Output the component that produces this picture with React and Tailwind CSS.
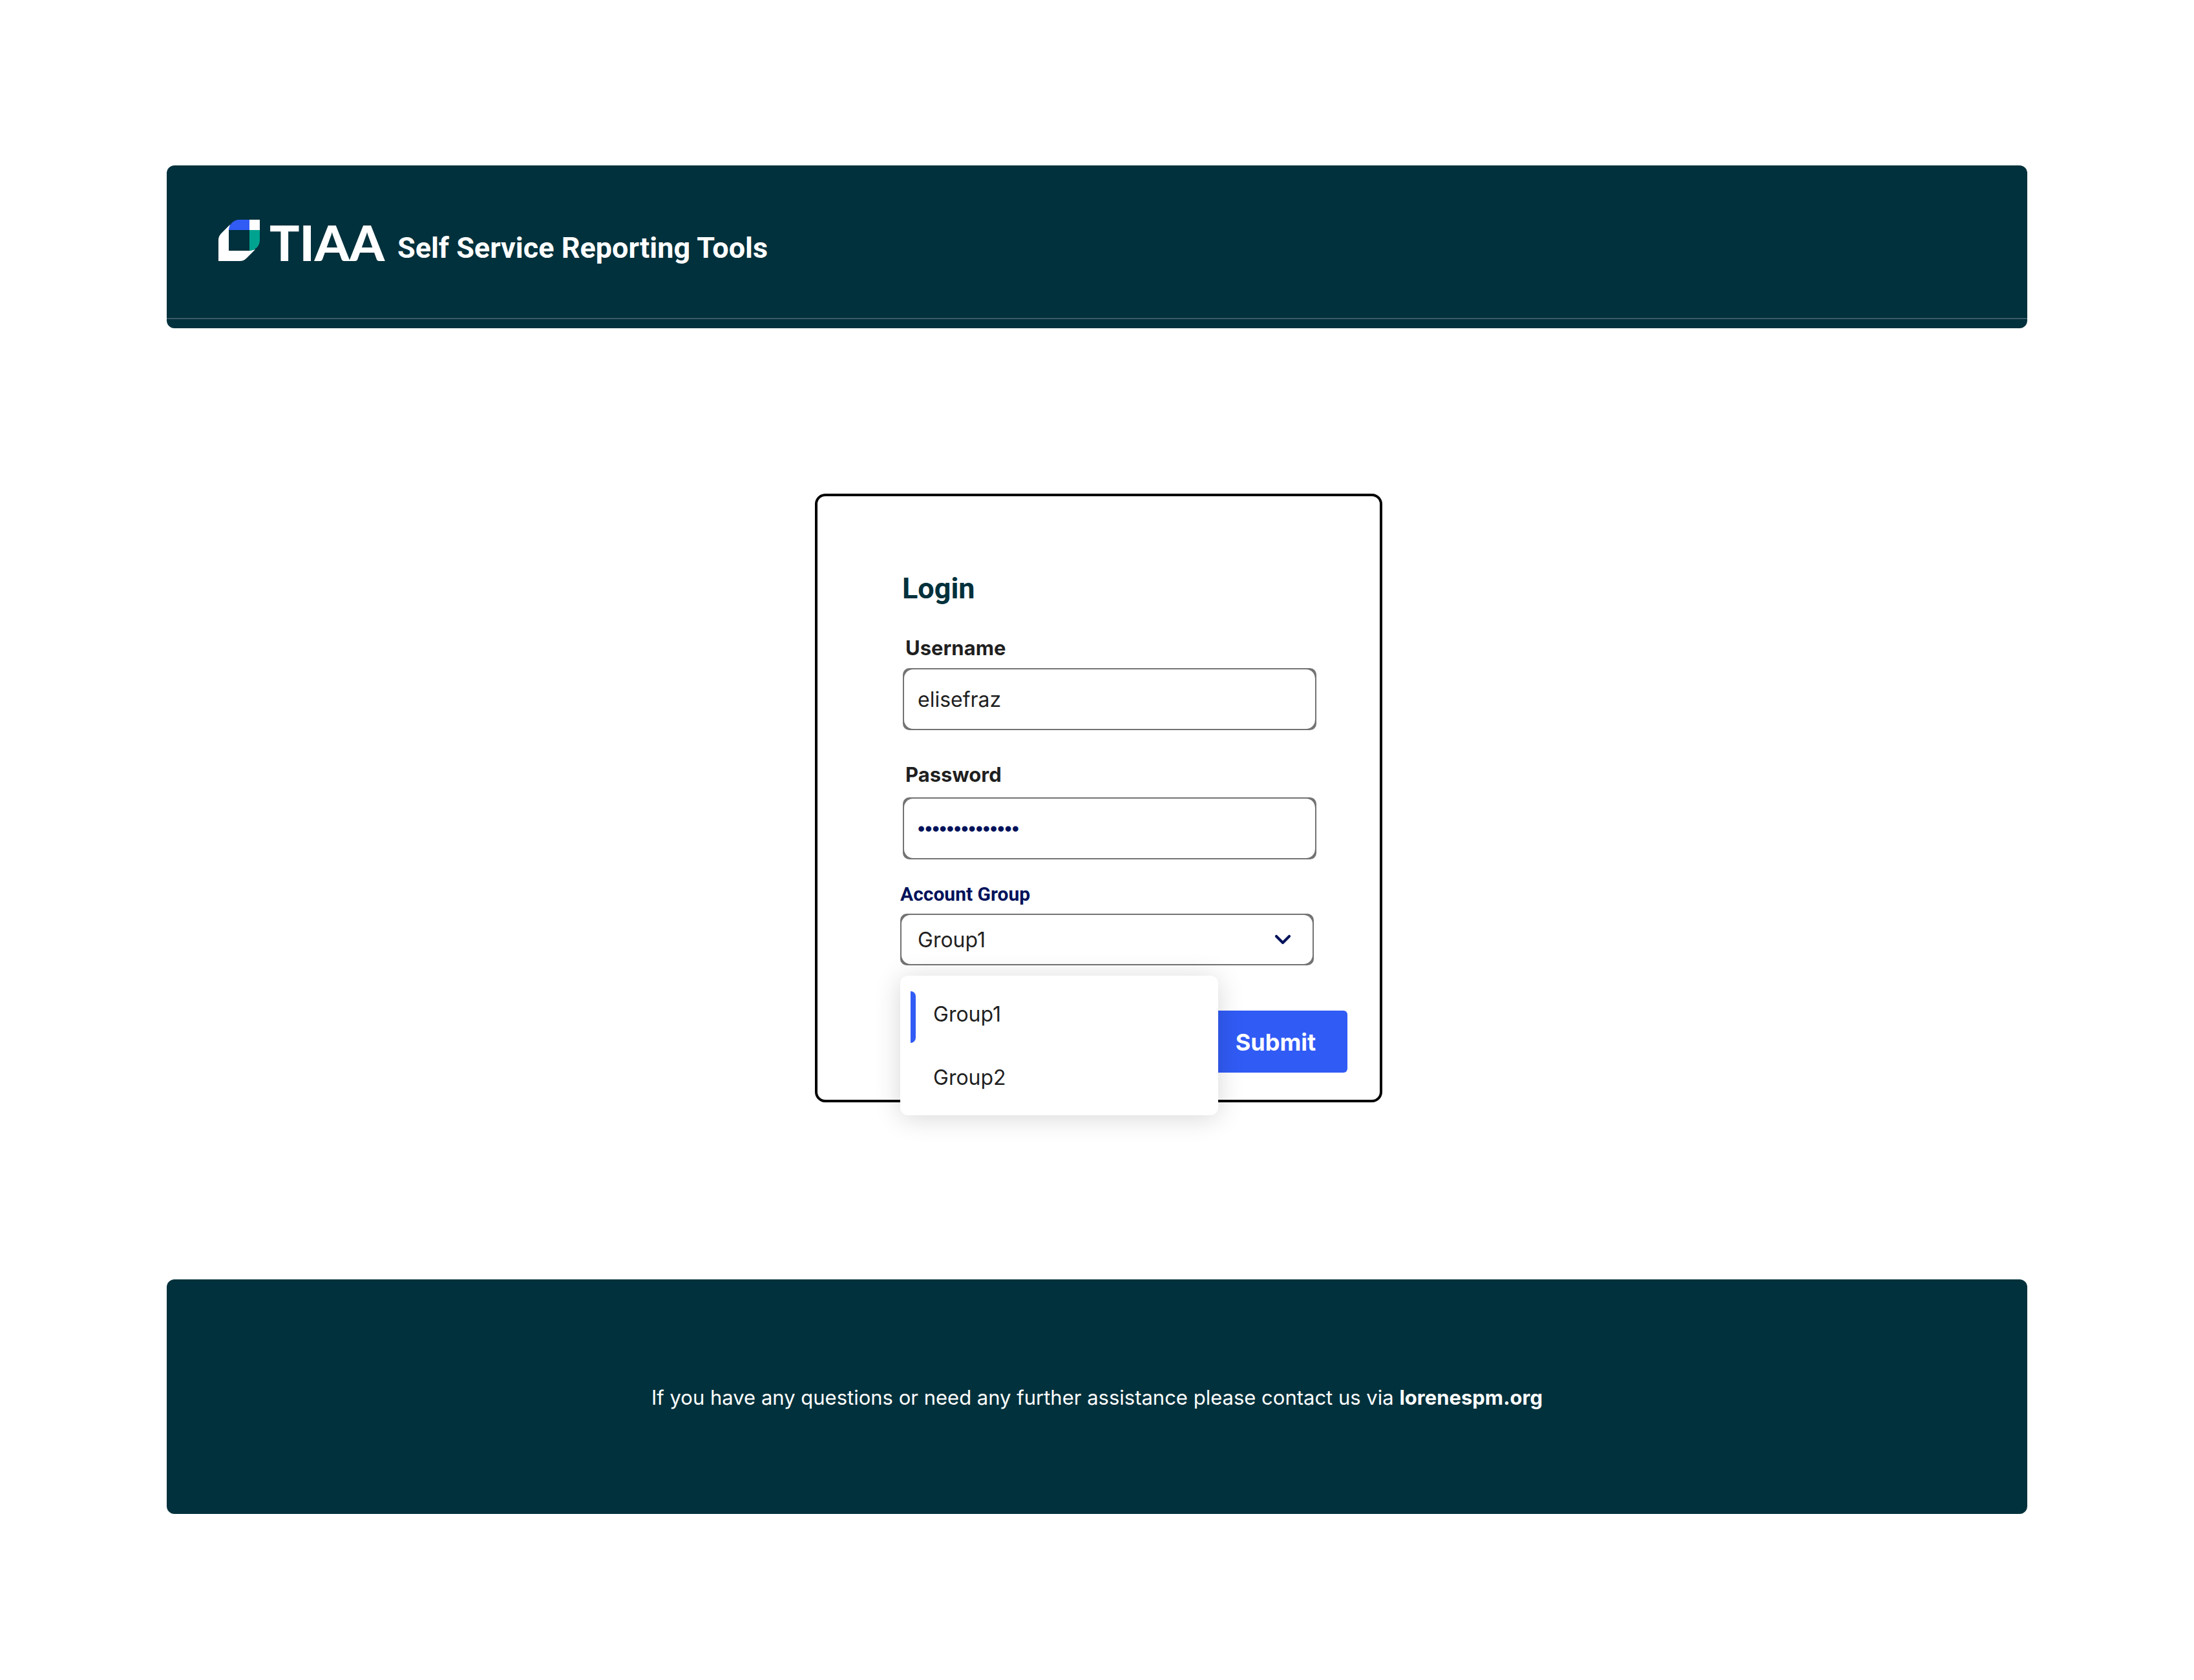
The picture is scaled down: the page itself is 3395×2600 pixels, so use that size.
import { useState } from "react";
import { ChevronDown } from "lucide-react";

const groups = ["Group1", "Group2"];

function LogoMark() {
  return (
    <svg viewBox="0 0 64 64" className="size-16 shrink-0" aria-hidden="true">
      <path
        d="M18 7.5L5 20.500C1.800 23.700 0 27 0 31.500V64H33C37.500 64 40.500 62.500 43.500 59.500L57 46L48 48H16V16Z"
        fill="#fff"
      />
      <path d="M16 16C16 8 23 0 32 0H48V16Z" fill="#315bf5" />
      <path d="M48 0H64V16H48Z" fill="#fff" />
      <path d="M48 16H64V32C64 41 56 48 48 48Z" fill="#00a38f" />
    </svg>
  );
}

function Field({ id, label, type, value, onChange, className, inputClass }) {
  return (
    <div className={`ml-1 flex flex-col ${className}`}>
      <label htmlFor={id} className="pl-1 text-[31px] leading-10 font-bold text-[#1f1f1f]">
        {label}
      </label>
      <div className="rounded-[10px] bg-[#737373] p-[2px]">
        <input
          id={id}
          type={type}
          value={value}
          onChange={(e) => onChange(e.target.value)}
          className={`block h-[92px] w-full rounded-[14px] bg-white px-[21px] text-[32px] outline-none ${inputClass}`}
        />
      </div>
    </div>
  );
}

export default function App() {
  const [username, setUsername] = useState("elisefraz");
  const [password, setPassword] = useState("abcdefghijklmn");
  const [group, setGroup] = useState("Group1");

  return (
    <div className="min-h-screen bg-white px-[258px] py-64 font-[Inter,sans-serif]">
      <header className="overflow-hidden rounded-xl bg-[#00313c] pb-[14px] text-white">
        <div className="flex items-end border-b-2 border-[#3a5a66] pt-[84px] pb-[88px] pl-20">
          <LogoMark />
          <span className="ml-[15px] h-16 font-[Lato,sans-serif] text-[77px] leading-[68px] font-black">TIAA</span>
          <h1 className="ml-5 h-10 font-[Roboto,sans-serif] text-[45px] leading-[40px] font-bold">
            Self Service Reporting Tools
          </h1>
        </div>
      </header>

      <main className="flex justify-center pt-64 pb-[274px] pl-[5px]">
        <form
          onSubmit={(e) => e.preventDefault()}
          className="flex w-[878px] flex-col rounded-2xl border-4 border-black bg-white pt-[117px] pr-[50px] pb-[42px] pl-32"
        >
          <h2 className="ml-[3px] font-[Roboto,sans-serif] text-[45px] leading-[52px] font-bold text-[#00313c]">Login</h2>
          <Field
            id="username"
            label="Username"
            type="text"
            value={username}
            onChange={setUsername}
            className="mt-[46px] w-[640px] gap-[11px]"
            inputClass="text-[#1f1f1f]"
          />
          <Field
            id="password"
            label="Password"
            type="password"
            value={password}
            onChange={setPassword}
            className="mt-[49px] w-[640px] gap-[15px]"
            inputClass="font-['Liberation_Sans',sans-serif] text-[#00125a]"
          />

          <div className="relative mt-9 flex w-[640px] flex-col gap-3">
            <label
              htmlFor="group"
              className="font-[Roboto,sans-serif] text-[30px] leading-9 font-bold text-[#00125a]"
            >
              Account Group
            </label>
            <div className="grid items-center rounded-[10px] bg-[#737373] p-[2px]">
              <select
                id="group"
                value={group}
                onChange={(e) => setGroup(e.target.value)}
                className="col-start-1 row-start-1 h-[76px] w-full appearance-none rounded-[14px] bg-white px-[25px] pt-[2px] text-[32px] text-[#1f1f1f] outline-none"
              >
                {groups.map((g) => (
                  <option key={g}>{g}</option>
                ))}
              </select>
              <ChevronDown
                className="pointer-events-none col-start-1 row-start-1 mr-[26px] size-10 justify-self-end text-[#00125a]"
                strokeWidth={2.5}
              />
            </div>

            <ul
              aria-label="Account groups"
              className="absolute top-full left-0 mt-4 w-[492px] rounded-xl bg-white py-[10px] shadow-[0_4px_40px_rgba(0,0,0,0.16)]"
            >
              {groups.map((g) => (
                <li key={g} className="relative">
                  {g === group && <span className="absolute top-[14px] left-4 h-20 w-2 rounded-r-lg bg-[#315bf5]" />}
                  <button
                    type="button"
                    onClick={() => setGroup(g)}
                    className="flex h-[98px] w-full items-center pt-[2px] pl-[51px] text-[32px] leading-10 text-[#1f1f1f]"
                  >
                    {g}
                  </button>
                </li>
              ))}
            </ul>
          </div>

          <button
            type="submit"
            className="mt-[70px] h-24 w-[222px] self-end rounded-md bg-[#315bf5] pt-[2px] text-4xl font-bold text-white"
          >
            Submit
          </button>
        </form>
      </main>

      <footer className="flex items-center justify-center rounded-xl bg-[#00313c] pt-[163px] pb-40 text-white">
        <p className="text-[31px] leading-10">
          If you have any questions or need any further assistance please contact us via{" "}
          <a href="#contact" className="font-bold">
            lorenespm.org
          </a>
        </p>
      </footer>
    </div>
  );
}
